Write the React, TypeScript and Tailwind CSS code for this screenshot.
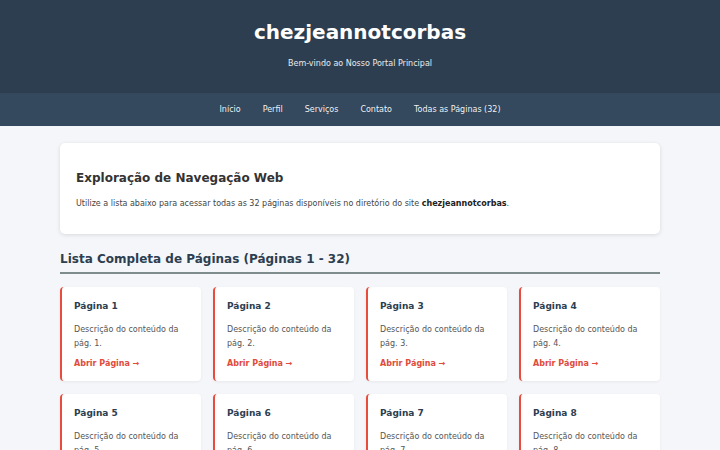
import React from "react";

const pages = Array.from({ length: 32 }, (_, i) => i + 1);

export default function App() {
  return (
    <div className="min-h-screen bg-[#f4f6f9] text-[#333] font-['DejaVu_Sans',sans-serif]">
      <header className="bg-[#2c3e50] h-[93px] flex flex-col items-center text-white">
        <h1 className="text-[20px] font-bold leading-[24px] mt-[20px]">chezjeannotcorbas</h1>
        <p className="text-[8px] leading-[10px] mt-[15px] text-white/90">Bem-vindo ao Nosso Portal Principal</p>
      </header>
      <nav className="bg-[#34495e] h-[33px] flex items-center justify-center gap-[22px] text-[8px] text-white/95">
        <span>Início</span>
        <span>Perfil</span>
        <span>Serviços</span>
        <span>Contato</span>
        <span>Todas as Páginas (32)</span>
      </nav>
      <main className="w-[600px] mx-auto pt-[17px]">
        <section className="bg-white rounded-[5px] shadow-[0_1px_4px_rgba(0,0,0,0.12)] h-[91px] px-4 pt-[27px]">
          <h2 className="text-[12px] font-bold leading-[16px] text-[#333]">Exploração de Navegação Web</h2>
          <p className="text-[8px] leading-[12px] mt-[12px] text-[#444]">
            Utilize a lista abaixo para acessar todas as 32 páginas disponíveis no diretório do site <strong className="font-bold text-[#222]">chezjeannotcorbas</strong>.
          </p>
        </section>
        <h2 className="mt-[17px] text-[12px] font-bold leading-[16px] text-[#2c3e50] pb-[5px] border-b-2 border-[#7f8c8d]">
          Lista Completa de Páginas (Páginas 1 - 32)
        </h2>
        <div className="grid grid-cols-4 gap-x-[12px] gap-y-[13px] mt-[13px]">
          {pages.map((n) => (
            <div key={n} className="bg-white rounded-[4px] border-l-2 border-[#e74c3c] shadow-[0_1px_3px_rgba(0,0,0,0.06)] pl-[12px] pr-3 pt-[13px] pb-[11px]">
              <h3 className="text-[9px] font-bold leading-[12px] text-[#2c3e50]">Página {n}</h3>
              <p className="text-[8px] leading-[14px] mt-[11px] text-[#555]">Descrição do conteúdo da pág. {n}.</p>
              <a className="block text-[8px] font-bold leading-[12px] mt-[7px] text-[#e04b3c]">Abrir Página →</a>
            </div>
          ))}
        </div>
      </main>
    </div>
  );
}
